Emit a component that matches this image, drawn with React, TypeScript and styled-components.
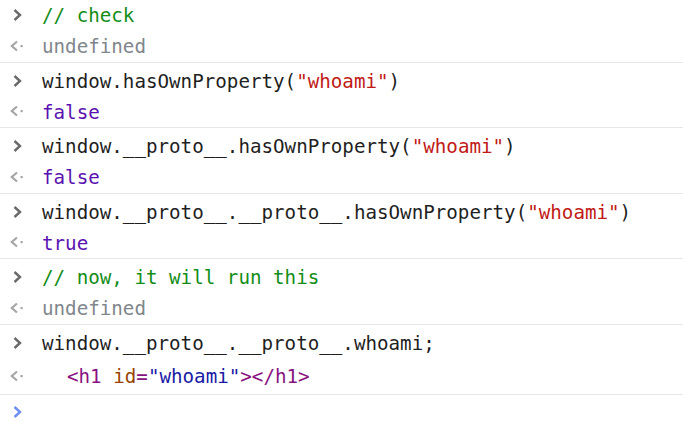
import React from "react";
import styled, { createGlobalStyle } from "styled-components";

const Global = createGlobalStyle`
  html, body { margin: 0; padding: 0; background: #ffffff; }
  body { overflow: hidden; }
`;

const Console = styled.div`
  width: 683px;
  height: 422px;
  margin-top: -3px;
  font-family: "DejaVu Sans Mono", "Liberation Mono", monospace;
  font-size: 19.2px;
  color: #1f1f1f;
  background: #fff;
`;

const Entry = styled.div`
  display: flex;
  flex-direction: column;
  padding-top: 3px;
  border-bottom: 1px solid #e6e6e6;
`;

const Row = styled.div<{ $h?: number }>`
  display: flex;
  align-items: center;
  height: ${(p) => p.$h ?? 30}px;
  white-space: pre;
`;

const Gutter = styled.div`
  width: 42px;
  flex: 0 0 42px;
  display: flex;
  align-items: center;
  padding-left: 10px;
  box-sizing: border-box;
`;

const Text = styled.span<{ $indent?: number }>`
  padding-left: ${(p) => p.$indent ?? 0}px;
  padding-top: 2px;
  line-height: 1;
`;

const Comment = styled.span`color: #138d17;`;
const Str = styled.span`color: #c11a16;`;
const Undef = styled.span`color: #80868b;`;
const Bool = styled.span`color: #5a12b0;`;
const Tag = styled.span`color: #881280;`;
const Attr = styled.span`color: #994500;`;
const AttrVal = styled.span`color: #1a1aa6;`;

const InIcon = ({ color = "#6a6a6a" }: { color?: string }) => (
  <svg width="14" height="14" viewBox="0 0 14 14" style={{ marginLeft: 2 }}>
    <path d="M2.5 2 L8 7 L2.5 12" fill="none" stroke={color} strokeWidth="2.4" />
  </svg>
);

const OutIcon = () => (
  <svg width="14" height="14" viewBox="0 0 14 14">
    <path d="M7 2.5 L1.8 7 L7 11.5" fill="none" stroke="#a6a6a6" strokeWidth="2.2" />
    <rect x="10.5" y="6" width="2.2" height="2.2" fill="#a6a6a6" />
  </svg>
);

const Input: React.FC<{ children: React.ReactNode }> = ({ children }) => (
  <Row>
    <Gutter>
      <InIcon />
    </Gutter>
    <Text>{children}</Text>
  </Row>
);

const Output: React.FC<{ children: React.ReactNode; indent?: number; h?: number }> = ({
  children,
  indent,
  h = 31.5,
}) => (
  <Row $h={h}>
    <Gutter>
      <OutIcon />
    </Gutter>
    <Text $indent={indent}>{children}</Text>
  </Row>
);

const Whoami = () => <Str>"whoami"</Str>;

export default function App() {
  return (
    <>
      <Global />
      <Console>
        <Entry>
          <Input>
            <Comment>// check</Comment>
          </Input>
          <Output>
            <Undef>undefined</Undef>
          </Output>
        </Entry>
        <Entry>
          <Input>
            window.hasOwnProperty(<Whoami />)
          </Input>
          <Output>
            <Bool>false</Bool>
          </Output>
        </Entry>
        <Entry>
          <Input>
            window.__proto__.hasOwnProperty(<Whoami />)
          </Input>
          <Output>
            <Bool>false</Bool>
          </Output>
        </Entry>
        <Entry>
          <Input>
            window.__proto__.__proto__.hasOwnProperty(<Whoami />)
          </Input>
          <Output>
            <Bool>true</Bool>
          </Output>
        </Entry>
        <Entry>
          <Input>
            <Comment>// now, it will run this</Comment>
          </Input>
          <Output>
            <Undef>undefined</Undef>
          </Output>
        </Entry>
        <Entry>
          <Input>window.__proto__.__proto__.whoami;</Input>
          <Output indent={25} h={36}>
            <Tag>&lt;h1</Tag> <Attr>id</Attr>
            <Tag>=</Tag>
            <AttrVal>"whoami"</AttrVal>
            <Tag>&gt;&lt;/h1&gt;</Tag>
          </Output>
        </Entry>
        <Row $h={34}>
          <Gutter>
            <InIcon color="#6f8ff0" />
          </Gutter>
        </Row>
      </Console>
    </>
  );
}
